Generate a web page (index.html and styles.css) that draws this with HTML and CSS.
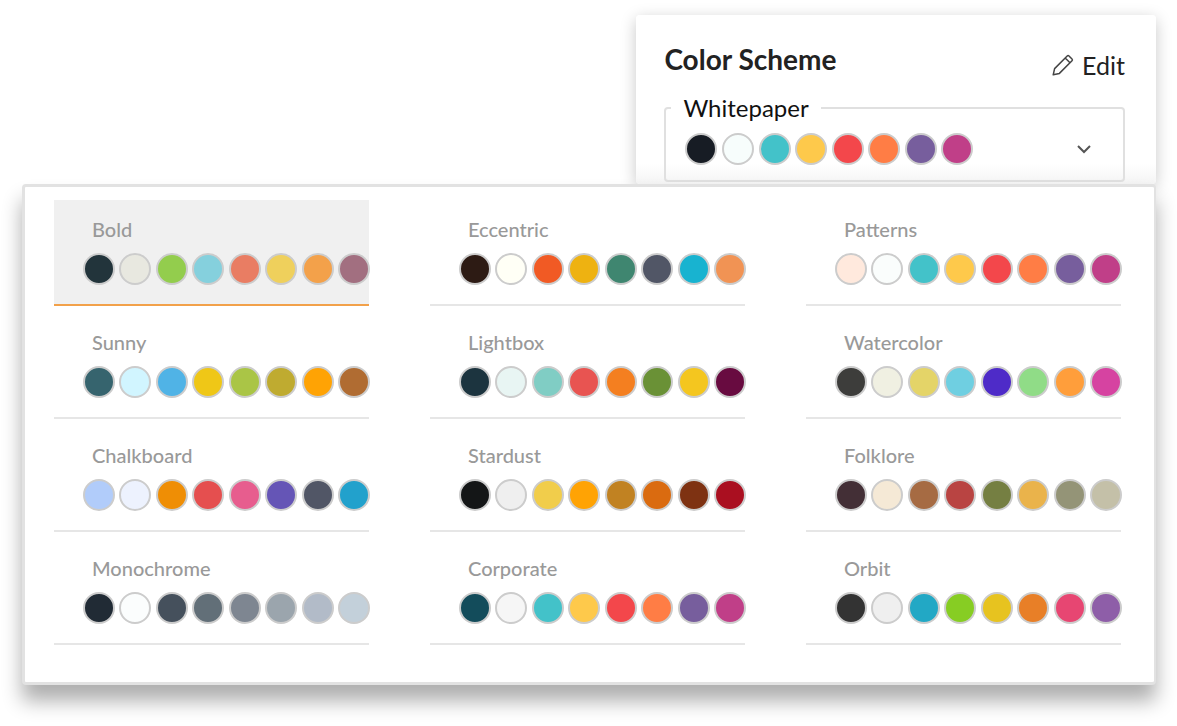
FILE: index.html
```html
<!DOCTYPE html>
<html lang="en">
<head>
  <meta charset="UTF-8">
  <title>Color Scheme</title>
  <meta name="viewport" content="width=device-width, initial-scale=1.0">
  <link rel="stylesheet" href="styles.css">
</head>
<body>

  <main class="picker">
    <!-- Current scheme -->
    <section class="card">
      <div class="card-header">
        <h1>Color Scheme</h1>
        <button type="button" class="edit-btn">
          <svg class="pencil" viewBox="0 0 22 22" aria-hidden="true">
            <path d="M1.2 20.8 L2.6 14.6 L15.2 2 Q16.1 1.100 17 2 L20 5 Q20.900 5.900 20 6.800 L7.400 19.400 Z M13.200 4 L18 8.800"/>
          </svg>
          Edit
        </button>
      </div>

      <fieldset class="current">
        <legend id="current-name">Whitepaper</legend>
        <button type="button" class="current-btn" aria-labelledby="current-name" aria-expanded="true">
          <span class="swatches" id="current-swatches"></span>
          <svg class="chevron" viewBox="0 0 16 10" aria-hidden="true">
            <path d="M2 2 L8 8 L14 2"/>
          </svg>
        </button>
      </fieldset>
    </section>

    <!-- Scheme list -->
    <section class="panel" id="schemes" aria-label="Color schemes"></section>
  </main>

  <script src="script.js"></script>
</body>
</html>
```

FILE: styles.css
```css
* {
  margin: 0;
  padding: 0;
  box-sizing: border-box;
}

body {
  font-family: 'Lato', sans-serif;
  background: #fff;
  color: #222;
}

button {
  font: inherit;
  color: inherit;
  background: none;
  border: none;
  cursor: pointer;
}

.picker {
  display: flex;
  flex-direction: column;
  padding: 15px 21px 40px 22px;
}

.card {
  align-self: flex-end;
  width: calc(46% - 2px);
  padding: 27px 31px 2px 28px;
  background: linear-gradient(to top, #f4f4f4, #fff 20px);
  border-radius: 4px;
  box-shadow: 0 4px 16px rgba(0, 0, 0, 0.22);
}

.card-header {
  display: flex;
  justify-content: space-between;
  align-items: flex-end;
}

h1 {
  font-size: 28px;
  line-height: 34px;
  font-weight: 700;
  margin-bottom: 4px;
}

.edit-btn {
  display: flex;
  align-items: center;
  gap: 8px;
  font-size: 25px;
  line-height: 30px;
}

.pencil {
  width: 22px;
  height: 22px;
  fill: none;
  stroke: #444;
  stroke-width: 1.5;
  stroke-linejoin: round;
}

.current {
  margin-top: 13px;
  border: 2px solid #e0e0e0;
  border-radius: 4px;
}

.current legend {
  margin-left: 5px;
  padding: 0 12px;
  font-size: 24px;
  line-height: 30px;
  color: #111;
}

.current-btn {
  display: flex;
  justify-content: space-between;
  align-items: center;
  width: 100%;
  padding: 10px 31px 15px 19px;
}

.current-btn .swatches {
  flex: 0 1 288px;
}

.chevron {
  width: 16px;
  height: 10px;
  fill: none;
  stroke: #555;
  stroke-width: 2;
}

.swatches {
  display: flex;
  justify-content: space-between;
}

.swatch {
  width: 32px;
  height: 32px;
  border: 2px solid #ccc;
  border-radius: 50%;
}

.panel {
  position: relative;
  display: grid;
  grid-template-columns: repeat(3, 1fr);
  gap: 7px 61px;
  padding: 13px 33px 37px 29px;
  background: #fff;
  border: 3px solid #e2e2e2;
  border-right-width: 2px;
  border-radius: 4px;
  box-shadow: 0 16px 20px rgba(0, 0, 0, 0.32);
}

.scheme {
  min-width: 0;
  padding: 17px 0 19px 29px;
  text-align: left;
  border-bottom: 2px solid #e6e6e6;
}

.scheme .swatches {
  margin-right: -1px;
}

.scheme-name {
  display: block;
  padding-left: 9px;
  margin-bottom: 12px;
  font-size: 20px;
  line-height: 24px;
  font-weight: 500;
  color: #999;
}

.scheme.selected {
  background: #f0f0f0;
  border-bottom-color: #f2a14a;
}

@media (max-width: 900px) {
  .card {
    width: 100%;
  }

  .panel {
    grid-template-columns: 1fr;
  }
}
```

FILE: script.js
```js
const current = ['#171c24', '#f7fdfc', '#43c2c9', '#fec94b', '#f3474b', '#ff7d45', '#775e9d', '#c03f88'];

const schemes = [
  { name: 'Bold', colors: ['#22343b', '#e8e8e0', '#93cd4d', '#85d0dd', '#e97d63', '#efd05c', '#f3a14a', '#a26f80'] },
  { name: 'Eccentric', colors: ['#2d1b14', '#fffff6', '#f15a24', '#eeb211', '#3f8670', '#515666', '#18b3d0', '#f19354'] },
  { name: 'Patterns', colors: ['#ffe9dd', '#fafdfc', '#43c2c9', '#fec94b', '#f3474b', '#ff7d45', '#775e9d', '#c03f88'] },
  { name: 'Sunny', colors: ['#36646e', '#d1f5ff', '#50b3e6', '#efc717', '#aac546', '#bfab30', '#ffa304', '#b06c32'] },
  { name: 'Lightbox', colors: ['#1c343f', '#e8f5f3', '#80cdc4', '#e85451', '#f47f20', '#6a9136', '#f4c61f', '#680b40'] },
  { name: 'Watercolor', colors: ['#3d3d3b', '#f0f0e2', '#e4d468', '#6fcfe1', '#4e2bc8', '#90dc87', '#ff9e3b', '#d643a1'] },
  { name: 'Chalkboard', colors: ['#b1ccfa', '#edf2fe', '#ef8e05', '#e54f4f', '#e75d8e', '#6555b6', '#515666', '#22a1cc'] },
  { name: 'Stardust', colors: ['#141617', '#efefef', '#f1cd4b', '#ffa304', '#c18222', '#da6b10', '#7e3212', '#aa0f20'] },
  { name: 'Folklore', colors: ['#432f36', '#f5e9d6', '#a66b43', '#b94442', '#757f42', '#eab34b', '#949477', '#c4c0a8'] },
  { name: 'Monochrome', colors: ['#212b35', '#fbfdfd', '#45505c', '#626f78', '#7e8691', '#9ba5ad', '#b2bbc8', '#c3d0da'] },
  { name: 'Corporate', colors: ['#134c5b', '#f6f6f6', '#43c2c9', '#fec94b', '#f3474b', '#ff7d45', '#775e9d', '#c03f88'] },
  { name: 'Orbit', colors: ['#333333', '#efefef', '#22a8c5', '#87cd23', '#e7c31f', '#e87f27', '#e74672', '#8e5ea8'] }
];

function addSwatches(row, colors) {
  colors.forEach(color => {
    const swatch = document.createElement('span');
    swatch.className = 'swatch';
    swatch.style.backgroundColor = color;
    row.appendChild(swatch);
  });
}

addSwatches(document.getElementById('current-swatches'), current);

const panel = document.getElementById('schemes');

schemes.forEach((scheme, i) => {
  const item = document.createElement('button');
  item.type = 'button';
  item.className = i === 0 ? 'scheme selected' : 'scheme';

  const name = document.createElement('span');
  name.className = 'scheme-name';
  name.textContent = scheme.name;

  const row = document.createElement('span');
  row.className = 'swatches';
  addSwatches(row, scheme.colors);

  item.append(name, row);
  item.addEventListener('click', () => {
    panel.querySelector('.selected').classList.remove('selected');
    item.classList.add('selected');
  });
  panel.appendChild(item);
});
```
